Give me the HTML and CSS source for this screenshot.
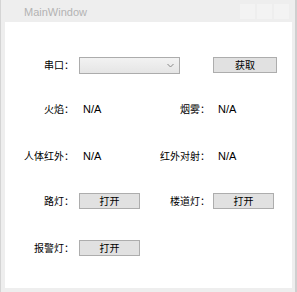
FILE: index.html
```html
<!DOCTYPE html>
<html>
<head>
<meta charset="utf-8">
<link rel="stylesheet" href="styles.css">
</head>
<body>
<div class="window">
  <div class="titlebar">
    <span class="title">MainWindow</span>
    <div class="ctrls"><span class="ctrl"></span><span class="ctrl"></span><span class="ctrl"></span></div>
  </div>
  <div class="client">
    <div class="form">
      <div class="lbl l1">串口：</div>
      <div class="combo">
        <svg class="chev" width="7" height="5" viewBox="0 0 7 5"><path d="M0.5 1 L3.5 4 L6.5 1" fill="none" stroke="#888" stroke-width="1"/></svg>
      </div>
      <div class="c4"><button class="btn wide">获取</button></div>

      <div class="lbl l1">火焰：</div>
      <div class="val">N/A</div>
      <div class="lbl l3">烟雾：</div>
      <div class="val v4">N/A</div>

      <div class="lbl l1">人体红外：</div>
      <div class="val">N/A</div>
      <div class="lbl l3">红外对射：</div>
      <div class="val v4">N/A</div>

      <div class="lbl l1">路灯：</div>
      <div><button class="btn">打开</button></div>
      <div class="lbl l3">楼道灯：</div>
      <div><button class="btn">打开</button></div>

      <div class="lbl l1">报警灯：</div>
      <div><button class="btn">打开</button></div>
    </div>
  </div>
</div>
</body>
</html>
```
FILE: styles.css
```css
html, body {
  margin: 0;
  padding: 0;
  background: #ffffff;
}
.window {
  width: 297px;
  height: 292px;
  box-sizing: border-box;
  background: #eeeeee;
  border-left: 1px solid #d4d4d4;
  border-right: 2px solid #cfcfcf;
  display: flex;
  flex-direction: column;
  padding: 0 3px 4px 4px;
}
.titlebar {
  height: 22px;
  flex: none;
  display: flex;
  align-items: center;
  justify-content: space-between;
}
.title {
  font-family: "Liberation Sans", sans-serif;
  font-size: 11px;
  color: #b3b3b3;
  margin-left: 19px;
  margin-top: 1px;
}
.ctrls {
  display: flex;
  gap: 2px;
  align-self: flex-start;
  margin-top: 4px;
  margin-right: 3px;
}
.ctrl {
  width: 15px;
  height: 15px;
  background: #f3f3f3;
}
.client {
  flex: 1;
  background: #ffffff;
}
.form {
  display: grid;
  grid-template-columns: 74px 61px 73px 64px;
  grid-template-rows: 44px 47px 45px 47px 16px;
  align-items: start;
  padding-top: 35px;
}
.lbl {
  font-family: "Noto Sans CJK SC", sans-serif;
  font-size: 10px;
  line-height: 16px;
  color: #000;
  text-align: right;
  white-space: nowrap;
}
.l1 { grid-column: 1; padding-right: 5px; }
.l3 { grid-column: 3; padding-right: 3px; }
.val {
  font-family: "Liberation Sans", sans-serif;
  font-size: 11px;
  line-height: 16px;
  color: #000;
  padding-left: 4px;
}
.v4 { padding-left: 5px; }
.combo {
  grid-column: 2 / 4;
  width: 101px;
  height: 17px;
  box-sizing: border-box;
  border: 1px solid #acacac;
  background: linear-gradient(#f2f2f2, #e5e5e5);
  display: flex;
  align-items: center;
  justify-content: flex-end;
  padding-right: 5px;
}
.chev { display: block; }
.c4 { grid-column: 4; }
.btn {
  display: block;
  width: 61px;
  height: 16px;
  box-sizing: border-box;
  border: 1px solid #adadad;
  background: #e1e1e1;
  margin: 0;
  padding: 0;
  font-family: "Noto Sans CJK SC", sans-serif;
  font-size: 10px;
  line-height: 14px;
  color: #000;
}
.btn.wide { width: 64px; }
```
